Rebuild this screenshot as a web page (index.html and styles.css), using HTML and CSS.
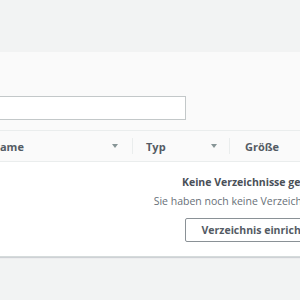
FILE: index.html
```html
<!DOCTYPE html>
<html lang="de">

<head>
  <meta charset="UTF-8">
  <meta name="viewport" content="width=device-width, initial-scale=1.0">
  <title>Verzeichnisse</title>
  <link rel="stylesheet" href="styles.css">
</head>

<body>
  <div class="top"></div>

  <div class="card">
    <div class="filter">
      <input type="text" class="search">
    </div>

    <div class="table-head">
      <div class="col col-name">
        <span>Name</span>
        <span class="sort"></span>
      </div>
      <div class="col col-type">
        <span>Typ</span>
        <span class="sort"></span>
      </div>
      <div class="col col-size">
        <span>Größe</span>
      </div>
    </div>

    <div class="empty">
      <p class="empty-title">Keine Verzeichnisse gefunden</p>
      <p class="empty-text">Sie haben noch keine Verzeichnisse erstellt.</p>
      <button class="btn">Verzeichnis einrichten</button>
    </div>
  </div>
</body>

</html>
```

FILE: styles.css
```css
/* Grundlayout */
* {
  margin: 0;
  padding: 0;
  box-sizing: border-box;
}

body {
  font-family: "Open Sans", Arial, sans-serif;
  background: #f2f3f3;
  color: #545b64;
  width: 300px;
  height: 300px;
  overflow: hidden;
}

.top {
  height: 52px;
}

.card {
  margin-left: -30px;
  width: 580px;
  background: #fff;
  box-shadow: 0 1px 1px rgba(0, 22, 44, 0.15);
  border-bottom: 1px solid #d5dbdb;
}

/* Filterbereich */
.filter {
  background: #fafafa;
  padding: 44px 0 10px 20px;
}

.search {
  display: block;
  width: 196px;
  height: 24px;
  border: 1px solid #c3c8c9;
  background: #fff;
}

/* Tabellenkopf */
.table-head {
  display: flex;
  align-items: center;
  height: 32px;
  background: #fafafa;
  border-top: 1px solid #eaeded;
  border-bottom: 1px solid #eaeded;
  font-size: 11px;
  font-weight: 700;
  color: #545b64;
}

.col {
  display: flex;
  align-items: center;
  justify-content: space-between;
  height: 16px;
  border-right: 1px solid #eaeded;
}

.col-name {
  width: 163px;
  padding: 0 14px 0 21px;
}

.col-type {
  width: 97px;
  padding: 0 12px 0 13px;
}

.col-size {
  padding: 0 15px;
  border-right: none;
}

.sort {
  width: 0;
  height: 0;
  border-left: 3px solid transparent;
  border-right: 3px solid transparent;
  border-top: 4px solid #879596;
}

/* Leerer Zustand */
.empty {
  display: flex;
  flex-direction: column;
  align-items: center;
  padding: 13px 0 14px;
}

.empty-title {
  font-size: 10.5px;
  font-weight: 700;
  color: #4a5058;
  line-height: 15px;
}

.empty-text {
  margin-top: 4px;
  font-size: 10.5px;
  color: #687078;
  line-height: 15px;
}

.btn {
  margin-top: 9px;
  height: 24px;
  padding: 0 16px;
  border: 1px solid #8a9196;
  border-radius: 2px;
  background: #fff;
  font-family: inherit;
  font-size: 10.5px;
  font-weight: 700;
  color: #545b64;
}
```
